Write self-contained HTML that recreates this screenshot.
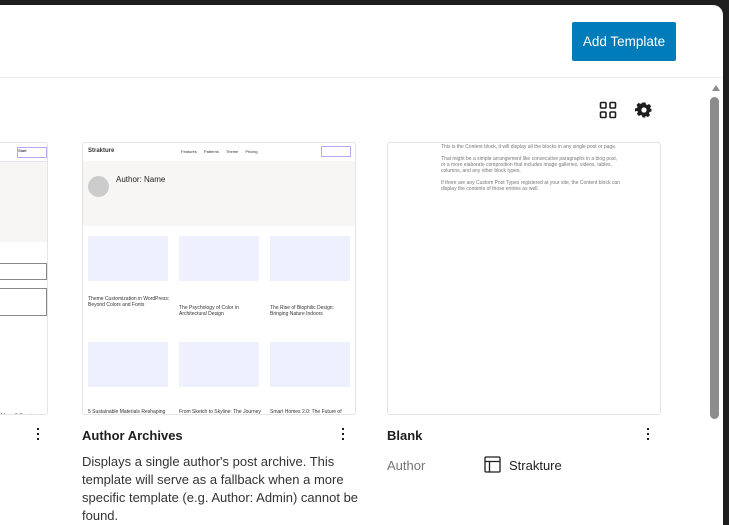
<!DOCTYPE html>
<html><head><style>
body{margin:0;width:729px;height:525px;background:#1e1e1e;overflow:hidden;font-family:"Liberation Sans",sans-serif;position:relative}
.page{position:absolute;left:0;top:5px;width:723px;height:520px;background:#fff;border-top-right-radius:10px;overflow:hidden}
.hdr{position:absolute;left:0;top:0;width:723px;height:72px;border-bottom:1px solid #eee}
.btn{position:absolute;left:572px;top:17px;width:104px;height:39px;background:#007cba;color:#fff;font-size:13.5px;line-height:39px;text-align:center;border-radius:2px}
.card{position:absolute;top:137px;height:271px;border:1px solid #e4e4e4;border-radius:3px;background:#fff;overflow:hidden}
.t{position:absolute;font-size:13px;color:#1e1e1e}
.d{position:absolute;font-size:13px;color:#333;line-height:20px}
.dots{position:absolute;width:3px;}
.dots i{display:block;width:2px;height:2px;background:#1e1e1e;margin-bottom:3px}
.ph{position:absolute;background:#eef0fd;width:80px;height:45px}
.sm{position:absolute;font-size:5px;color:#333;line-height:6px}
.scroll{position:absolute;left:710px;top:92px;width:9px;height:322px;background:#8c8c8c;border-radius:5px}
</style></head><body>
<div class="page">
<div class="hdr"><div class="btn">Add Template</div></div>
<svg style="position:absolute;left:599px;top:96px" width="18" height="18" viewBox="0 0 18 18" fill="none" stroke="#1e1e1e" stroke-width="1.6"><rect x="1.5" y="1.5" width="5.5" height="5.5" rx="1"/><rect x="11" y="1.5" width="5.5" height="5.5" rx="1"/><rect x="1.5" y="11" width="5.5" height="5.5" rx="1"/><rect x="11" y="11" width="5.5" height="5.5" rx="1"/></svg>
<svg style="position:absolute;left:635px;top:96px" width="18" height="18" viewBox="0 0 24 24"><path fill="#1e1e1e" d="M10 2h4l.6 2.6 1.8.8 2.3-1.4 2.8 2.8-1.4 2.3.8 1.8L22 10v4l-2.6.6-.8 1.8 1.4 2.3-2.8 2.8-2.3-1.4-1.8.8L14 22h-4l-.6-2.6-1.8-.8-2.3 1.4-2.8-2.8 1.4-2.3-.8-1.8L0 14v-4l2.6-.6.8-1.8L2 5.3 4.8 2.5l2.3 1.4 1.8-.8zM12 8.5a3.5 3.5 0 100 7 3.5 3.5 0 000-7z"/></svg>
<div style="position:absolute;left:712px;top:80px;width:0;height:0;border-left:4px solid transparent;border-right:4px solid transparent;border-bottom:6px solid #8c8c8c"></div>
<div class="scroll"></div>

<div class="card" style="left:-230px;width:276px;background:#fff">
<div style="position:absolute;left:0;top:0;width:276px;height:18px;border-bottom:1px solid #e6e0f8"></div>
<div style="position:absolute;left:246px;top:4px;width:28px;height:9px;border:1px solid #b9a8ef;font-size:4px">Start</div>
<div style="position:absolute;left:0;top:19px;width:276px;height:80px;background:#f7f6f4"></div>
<div style="position:absolute;left:210px;top:120px;width:64px;height:15px;border:1px solid #888"></div>
<div style="position:absolute;left:210px;top:145px;width:64px;height:26px;border:1px solid #888"></div>
<div class="sm" style="left:230px;top:270px">Ideas &amp; Services</div>
</div>

<div class="card" style="left:82px;width:272px">
<div class="sm" style="left:5px;top:5px;font-size:6px;font-weight:bold">Strakture</div>
<div class="sm" style="left:98px;top:6px;font-size:4px;word-spacing:6px">Features Patterns Theme Pricing</div>
<div style="position:absolute;left:238px;top:3px;width:28px;height:9px;border:1px solid #b9a8ef"></div>
<div style="position:absolute;left:0;top:18px;width:272px;height:65px;background:#f7f6f4"></div>
<div style="position:absolute;left:5px;top:33px;width:21px;height:21px;border-radius:50%;background:#ccc"></div>
<div style="position:absolute;left:33px;top:32px;font-size:8px;color:#222">Author: Name</div>
<div class="ph" style="left:5px;top:93px"></div><div class="ph" style="left:96px;top:93px"></div><div class="ph" style="left:187px;top:93px"></div>
<div class="sm" style="left:5px;top:153px">Theme Customization in WordPress:<br>Beyond Colors and Fonts</div>
<div class="sm" style="left:96px;top:162px">The Psychology of Color in<br>Architectural Design</div>
<div class="sm" style="left:187px;top:162px">The Rise of Biophilic Design:<br>Bringing Nature Indoors</div>
<div class="ph" style="left:5px;top:199px"></div><div class="ph" style="left:96px;top:199px"></div><div class="ph" style="left:187px;top:199px"></div>
<div class="sm" style="left:5px;top:266px">5 Sustainable Materials Reshaping</div>
<div class="sm" style="left:96px;top:266px">From Sketch to Skyline: The Journey</div>
<div class="sm" style="left:187px;top:266px">Smart Homes 2.0: The Future of</div>
</div>

<div class="card" style="left:387px;width:272px">
<div class="sm" style="left:53px;top:1px;color:#777;width:180px">This is the Content block, it will display all the blocks in any single post or page.<br><br>That might be a simple arrangement like consecutive paragraphs in a blog post, or a more elaborate composition that includes image galleries, videos, tables, columns, and any other block types.<br><br>If there are any Custom Post Types registered at your site, the Content block can display the contents of those entries as well.</div>
</div>

<div class="dots" style="left:37px;top:423px"><i></i><i></i><i></i></div>
<div class="t" style="left:82px;top:423px;font-weight:bold;font-size:13px">Author Archives</div>
<div class="dots" style="left:342px;top:423px"><i></i><i></i><i></i></div>
<div class="d" style="left:82px;top:448px;width:285px;font-size:13px;line-height:18px">Displays a single author's post archive. This template will serve as a fallback when a more specific template (e.g. Author: Admin) cannot be found.</div>
<div class="t" style="left:387px;top:423px;font-weight:bold;font-size:13px">Blank</div>
<div class="dots" style="left:647px;top:423px"><i></i><i></i><i></i></div>
<div class="t" style="left:387px;top:453px;color:#757575;font-size:13px">Author</div>
<svg style="position:absolute;left:484px;top:451px" width="17" height="17" viewBox="0 0 17 17" fill="none" stroke="#1e1e1e" stroke-width="1.3"><rect x="1" y="1" width="15" height="15" rx="1"/><path d="M1 5.5h15M5.5 5.5V16"/></svg>
<div class="t" style="left:509px;top:453px;font-size:13px">Strakture</div>
</div>
</body></html>
